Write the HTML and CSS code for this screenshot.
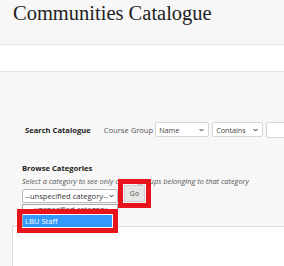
FILE: index.html
```html
<!DOCTYPE html>
<html lang="en">
<head>
<meta charset="utf-8">
<title>Communities Catalogue</title>
<link rel="stylesheet" href="styles.css">
</head>
<body>
<header class="header">
  <h1 class="title">Communities Catalogue</h1>
</header>
<div class="band"></div>
<main class="main">
  <div class="search-row">
    <span class="search-label">Search Catalogue</span>
    <span class="field-label">Course Group</span>
    <span class="select sel-name">Name<svg class="chev" viewBox="0 0 8 5" width="5" height="4"><path d="M1 1l3 3 3-3" fill="none" stroke="#222" stroke-width="1.6"/></svg></span>
    <span class="select sel-contains">Contains<svg class="chev" viewBox="0 0 8 5" width="5" height="4"><path d="M1 1l3 3 3-3" fill="none" stroke="#222" stroke-width="1.6"/></svg></span>
    <span class="text-input"></span>
  </div>
  <section class="browse">
    <div class="browse-title">Browse Categories</div>
    <div class="browse-hint">Select a category to see only course groups belonging to that category</div>
    <div class="browse-controls">
      <div class="cat-wrap">
        <span class="select sel-cat">--unspecified category--<svg class="chev" viewBox="0 0 8 5" width="5" height="4"><path d="M1 1l3 3 3-3" fill="none" stroke="#222" stroke-width="1.6"/></svg></span>
        <ul class="dropdown">
          <li class="opt">--unspecified category--</li>
          <li class="opt opt-active">LBU Staff</li>
        </ul>
      </div>
      <button class="go">Go</button>
    </div>
  </section>
  <div class="panel"></div>
</main>
</body>
</html>
```

FILE: styles.css
```css
* { box-sizing: border-box; }
html, body { margin: 0; padding: 0; }
body {
  background: #f7f7f7;
  font-family: "Open Sans", "Liberation Sans", sans-serif;
  color: #333;
  overflow: hidden;
  height: 266px;
}
.header {
  height: 45px;
  border-bottom: 1px solid #e2e2e2;
  padding-left: 13px;
}
.title {
  margin: 0;
  font-family: "Liberation Serif", serif;
  font-weight: normal;
  font-size: 20.5px;
  line-height: 26px;
  color: #1e1e1e;
}
.band {
  height: 27px;
  background: #fff;
  border-bottom: 1px solid #e2e2e2;
}
.main {
  padding-top: 50px;
}
.search-row {
  display: flex;
  align-items: center;
  height: 15px;
  padding-left: 25px;
}
.search-label {
  flex: none;
  font-weight: bold;
  font-size: 7.6px;
  color: #222;
  margin-right: 13px;
  white-space: nowrap;
}
.field-label {
  flex: none;
  font-size: 7.6px;
  color: #555;
  margin-right: 2px;
  white-space: nowrap;
}
.select {
  flex: none;
  display: flex;
  align-items: center;
  justify-content: space-between;
  height: 15px;
  background: #fff;
  border: 1px solid #d6d6d6;
  border-radius: 2px;
  font-size: 7.2px;
  color: #444;
  padding: 0 4px 0 3px;
  white-space: nowrap;
}
.chev { flex: none; }
.sel-name { width: 54px; margin-right: 3px; }
.sel-contains { width: 51px; margin-right: 3px; }
.text-input {
  flex: none;
  width: 40px;
  height: 16px;
  background: #fff;
  border: 1px solid #d6d6d6;
  border-radius: 2px;
}
.browse {
  padding-left: 22px;
  margin-top: 25px;
}
.browse-title {
  font-weight: bold;
  font-size: 7.6px;
  line-height: 12px;
  color: #222;
}
.browse-hint {
  font-style: italic;
  font-size: 7.4px;
  line-height: 14px;
  color: #555;
  white-space: nowrap;
}
.browse-controls {
  display: flex;
  align-items: flex-start;
  margin-top: 1px;
}
.cat-wrap {
  flex: none;
  position: relative;
}
.sel-cat {
  width: 96px;
  height: 14px;
  border-color: #b8b8b8;
  font-size: 7.6px;
  color: #333;
  padding: 0 3px 0 2px;
}
.dropdown {
  position: absolute;
  top: 15px;
  left: 0;
  width: 96px;
  margin: 0;
  padding: 0;
  list-style: none;
  background: #fff;
  border: 1px solid #aaa;
  border-bottom: none;
  font-size: 7.6px;
  color: #444;
}
.opt {
  height: 10px;
  line-height: 9px;
  padding-left: 6px;
  white-space: nowrap;
  overflow: hidden;
}
.opt-active {
  height: 12px;
  line-height: 12px;
  margin-right: 5px;
  padding-left: 2px;
  background: #3399ff;
  color: #fff;
  outline: 5px solid #e8141c;
  outline-offset: 1px;
}
.go {
  flex: none;
  margin: -4px 0 0 6px;
  width: 21px;
  height: 17px;
  padding: 0;
  background: #e6e6e6;
  border: 1px solid #cfcfcf;
  border-radius: 0;
  font-family: "Open Sans", "Liberation Sans", sans-serif;
  font-size: 7px;
  color: #555;
  outline: 5px solid #e8141c;
  outline-offset: 1px;
}
.panel {
  margin: 23px 0 0 12px;
  height: 120px;
  background: #fff;
  border-top: 1px solid #dcdcdc;
  border-left: 1px solid #dcdcdc;
}
```
